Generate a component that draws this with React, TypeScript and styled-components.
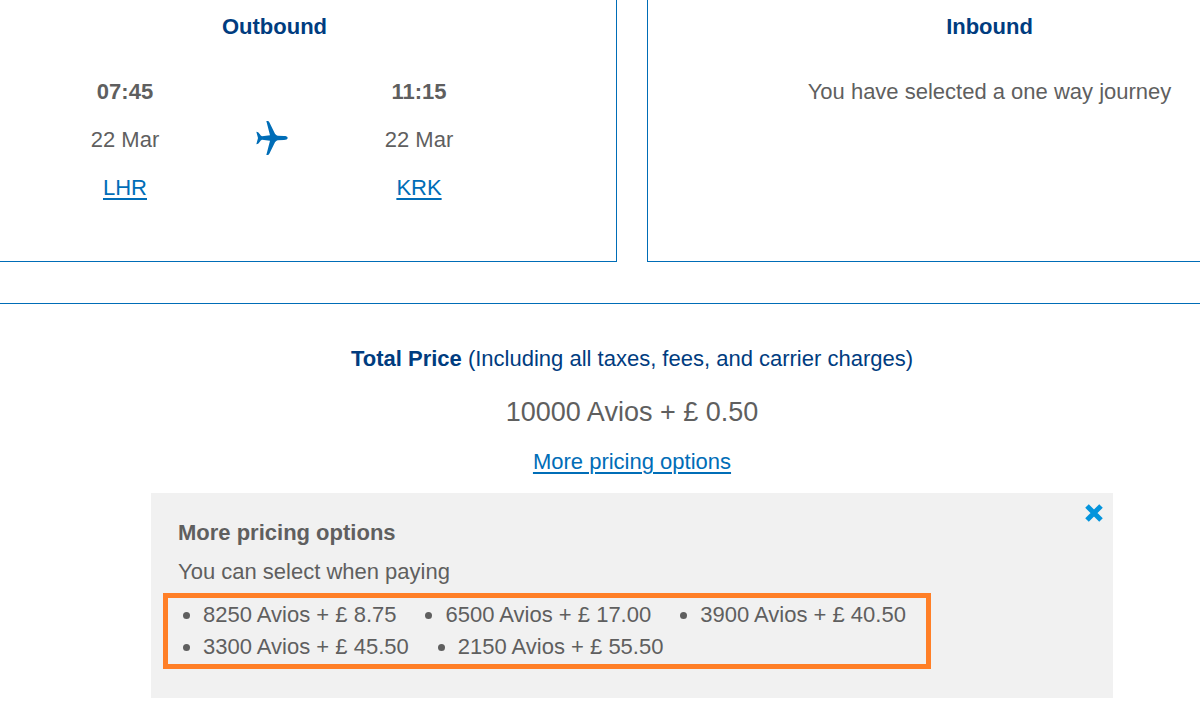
import React, { useState } from 'react';
import styled, { createGlobalStyle, css } from 'styled-components';

const color = {
  navy: '#003c7f',
  blue: '#006db7',
  sky: '#0494dc',
  text: '#5f5f5f',
  panel: '#f1f1f1',
  highlight: '#ff7f27',
};

const GlobalStyle = createGlobalStyle`
  *,
  *::before,
  *::after {
    box-sizing: border-box;
  }

  body {
    margin: 0;
    overflow-x: hidden;
    font-family: 'Liberation Sans', Arial, sans-serif;
    font-size: 22px;
    line-height: 32px;
    color: ${color.text};
    background-color: #fff;
  }

  h2,
  h3,
  p,
  ul {
    margin: 0;
    padding: 0;
    font-size: inherit;
  }
`;

const Viewport = styled.div`
  overflow: hidden;
`;

const Page = styled.main`
  margin: 0 -132px 28px -68px;
`;

const Journeys = styled.div`
  display: grid;
  grid-template-columns: 1fr 1fr;
  gap: 30px;
`;

const Journey = styled.section`
  padding: 11px 0 49px;
  border: 1px solid ${color.blue};
  border-top: 0;
  text-align: center;
`;

const JourneyTitle = styled.h2`
  margin-bottom: 25px;
  color: ${color.navy};
`;

const Legs = styled.div`
  display: grid;
  grid-template-columns: repeat(3, 147px);
  justify-content: center;
  align-items: center;
  padding-right: 5px;
`;

const Stop = styled.div`
  line-height: 48px;
`;

const Time = styled.strong`
  display: block;
`;

const JourneyNote = styled.p`
  line-height: 48px;
`;

const Link = styled.a`
  color: ${color.blue};
  text-decoration: underline;
  text-decoration-thickness: 2px;
  text-underline-offset: 3px;
`;

const PlaneIcon = styled.svg`
  display: block;
  width: 32px;
  height: 38px;
  margin: 0 auto;
  padding-bottom: 4px;
  fill: ${color.blue};
`;

const Pricing = styled.section`
  margin-top: 41px;
  padding-top: 39px;
  border-top: 1px solid ${color.blue};
  text-align: center;
`;

const PricingTitle = styled.h2<{ $light?: boolean }>`
  color: ${color.navy};

  ${({ $light }) =>
    $light &&
    css`
      font-weight: normal;
    `}
`;

const Price = styled.p`
  margin: 21px 0 18px;
  font-size: 27px;
`;

const Options = styled.div`
  display: flex;
  align-items: flex-start;
  margin: 15px 219px 0;
  background-color: ${color.panel};
  text-align: left;
`;

const OptionsBody = styled.div`
  flex: 1;
  padding: 24px 0 29px 27px;
`;

const OptionsHint = styled.p`
  margin: 7px 0 5px;
`;

const OptionsList = styled.ul`
  display: flex;
  flex-wrap: wrap;
  column-gap: 24px;
  max-width: 768px;
  margin-left: -15px;
  padding: 1px 10px;
  border: 5px solid ${color.highlight};
`;

const Option = styled.li`
  margin-left: 25px;
`;

const CloseButton = styled.button`
  display: flex;
  align-items: center;
  justify-content: center;
  width: 38px;
  height: 40px;
  padding: 0;
  border: 0;
  background: none;
  cursor: pointer;
`;

const CloseIcon = styled.svg`
  width: 18px;
  height: 18px;
  fill: none;
  stroke: ${color.sky};
  stroke-width: 5;
`;

const prices = [
  '8250 Avios + £ 8.75',
  '6500 Avios + £ 17.00',
  '3900 Avios + £ 40.50',
  '3300 Avios + £ 45.50',
  '2150 Avios + £ 55.50',
];

function JourneyStop({
  time,
  date,
  airport,
}: {
  time: string;
  date: string;
  airport: string;
}) {
  return (
    <Stop>
      <Time>{time}</Time>
      <p>{date}</p>
      <Link href={`#${airport}`}>{airport}</Link>
    </Stop>
  );
}

export default function App() {
  const [open, setOpen] = useState(true);

  return (
    <Viewport>
      <GlobalStyle />
      <Page>
        <Journeys>
          <Journey>
            <JourneyTitle>Outbound</JourneyTitle>
            <Legs>
              <JourneyStop time="07:45" date="22 Mar" airport="LHR" />
              <PlaneIcon viewBox="0 0 96 102" aria-hidden="true">
                <path d="M95 51C95 47 90 45 84 45L65 44Q60 43 57 38L40 4Q38 0 35 0H31L42 43L18 46Q14 45 11 39Q7 32 1 32L6 51L1 70Q7 70 11 63Q14 57 18 56L42 59L31 102H35Q38 102 40 98L57 64Q60 59 65 58L84 57C90 57 95 55 95 51Z" />
              </PlaneIcon>
              <JourneyStop time="11:15" date="22 Mar" airport="KRK" />
            </Legs>
          </Journey>
          <Journey>
            <JourneyTitle>Inbound</JourneyTitle>
            <JourneyNote>You have selected a one way journey</JourneyNote>
          </Journey>
        </Journeys>
        <Pricing>
          <PricingTitle $light>
            <strong>Total Price</strong> (Including all taxes, fees, and carrier
            charges)
          </PricingTitle>
          <Price>10000 Avios + £ 0.50</Price>
          <Link href="#options" onClick={() => setOpen(true)}>
            More pricing options
          </Link>
          {open && (
            <Options id="options">
              <OptionsBody>
                <h3>More pricing options</h3>
                <OptionsHint>You can select when paying</OptionsHint>
                <OptionsList>
                  {prices.map(price => (
                    <Option key={price}>{price}</Option>
                  ))}
                </OptionsList>
              </OptionsBody>
              <CloseButton
                type="button"
                aria-label="Close"
                onClick={() => setOpen(false)}
              >
                <CloseIcon viewBox="0 0 18 18">
                  <path d="M2 2L16 16M16 2L2 16" />
                </CloseIcon>
              </CloseButton>
            </Options>
          )}
        </Pricing>
      </Page>
    </Viewport>
  );
}
